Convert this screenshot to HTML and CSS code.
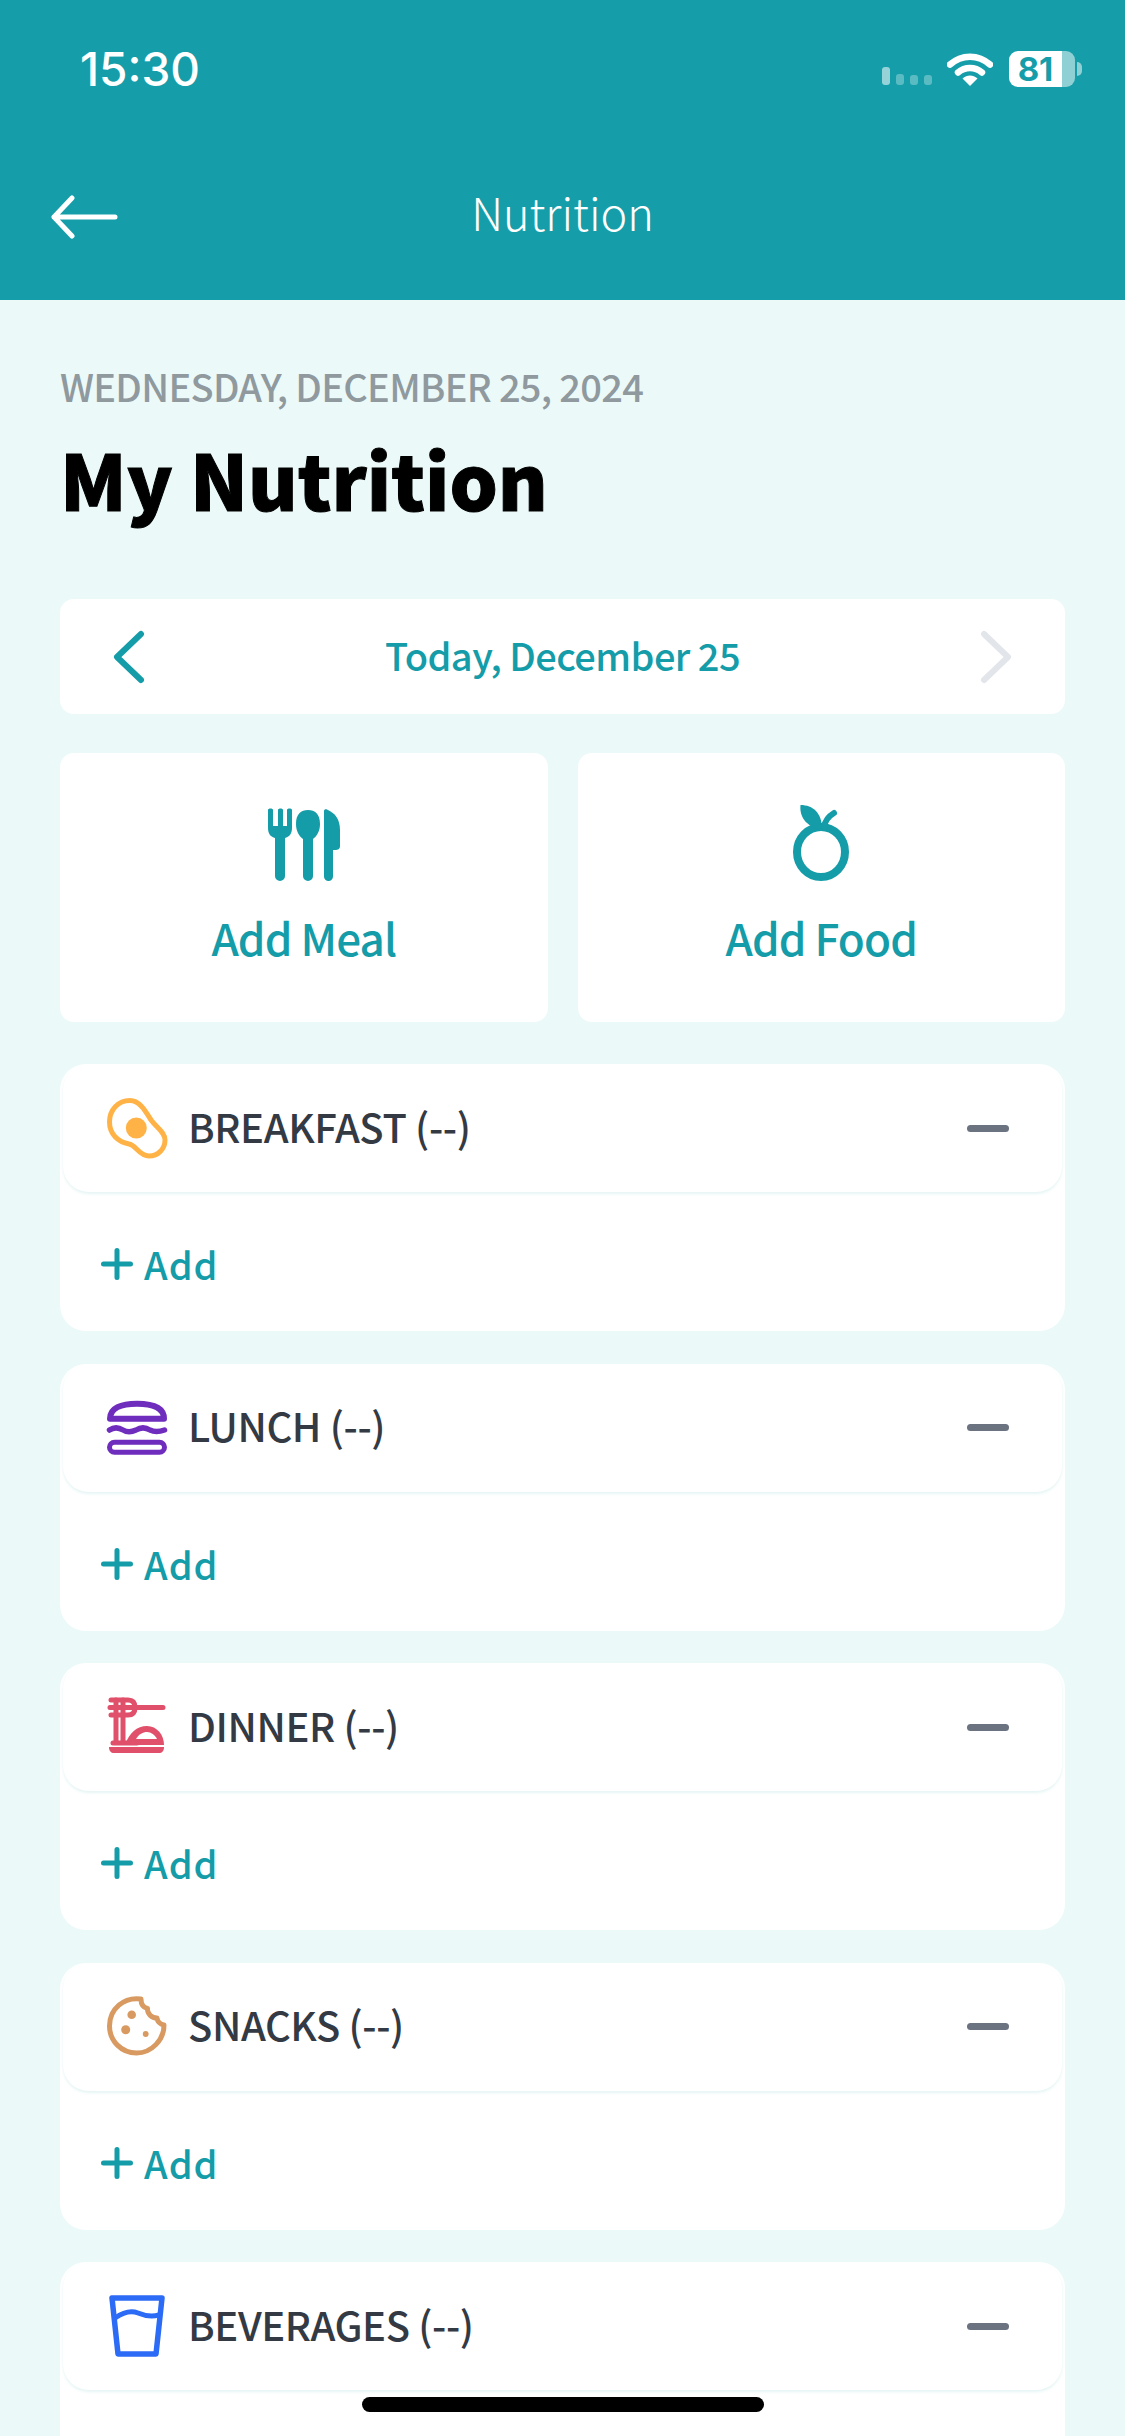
FILE: index.html
```html
<!DOCTYPE html>
<html lang="en">
<head>
    <meta charset="UTF-8">
    <meta name="viewport" content="width=device-width, initial-scale=1.0">
    <title>My Nutrition</title>
    <link rel="stylesheet" href="styles.css">
</head>
<body>
    <div class="screen">
        <header class="app-header">
            <div class="status-bar">
                <span class="status-time">15:30</span>
                <div class="status-icons">
                    <svg class="signal-icon" width="50" height="20" viewBox="0 0 50 20">
                        <rect x="0" y="1" width="8" height="18" rx="3" fill="#fff" opacity=".55"/>
                        <rect x="14" y="8" width="8" height="11" rx="3" fill="#fff" opacity=".3"/>
                        <rect x="28" y="9" width="8" height="10" rx="3" fill="#fff" opacity=".3"/>
                        <rect x="42" y="9" width="8" height="10" rx="3" fill="#fff" opacity=".3"/>
                    </svg>
                    <svg class="wifi-icon" width="46" height="33" viewBox="0 0 46 33">
                        <path d="M3 11.5C14.5 1 31.500 1 43 11.500" fill="none" stroke="#fff" stroke-width="6.500" stroke-linecap="round"/>
                        <path d="M11 19.500C18 13.500 28 13.500 35 19.500" fill="none" stroke="#fff" stroke-width="6.500" stroke-linecap="round"/>
                        <path d="M15.500 25.500C20 21.500 26 21.500 30.500 25.500L23 33Z" fill="#fff"/>
                    </svg>
                    <div class="battery">
                        <div class="battery-body">
                            <span class="battery-level">81</span>
                        </div>
                        <div class="battery-nub"></div>
                    </div>
                </div>
            </div>
            <div class="nav-bar">
                <svg class="back-icon" width="68" height="44" viewBox="0 0 68 44">
                    <path d="M22 3L4 22L22 41M4 22H65" fill="none" stroke="#fff" stroke-width="5" stroke-linecap="round" stroke-linejoin="round"/>
                </svg>
                <h1 class="nav-title">Nutrition</h1>
            </div>
        </header>

        <main class="content">
            <p class="today-label">WEDNESDAY, DECEMBER 25, 2024</p>
            <h2 class="page-title">My Nutrition</h2>

            <div class="date-picker">
                <svg width="34" height="54" viewBox="0 0 34 54">
                    <path d="M29 4L5 27L29 50" fill="none" stroke="#149ca8" stroke-width="6" stroke-linecap="round" stroke-linejoin="round"/>
                </svg>
                <span class="date-text">Today, December 25</span>
                <svg width="34" height="54" viewBox="0 0 34 54">
                    <path d="M5 4L29 27L5 50" fill="none" stroke="#e2e5e9" stroke-width="6" stroke-linecap="round" stroke-linejoin="round"/>
                </svg>
            </div>

            <div class="quick-actions">
                <div class="action-card">
                    <svg class="action-icon" width="76" height="76" viewBox="0 0 76 76">
                        <path d="M2 5V23C2 29 5 32 9 33V71A5 5 0 0 0 19 71V33C23 32 26 29 26 23V5C26 3 21 3 21 5V21H17V5C17 3 12 3 12 5V21H7V5C7 3 2 3 2 5Z" fill="#149ca8"/>
                        <path d="M30 19C30 9 35 5 42 5C49 5 54 9 54 19C54 26 51 31 47 34V71A5 5 0 0 1 37 71V34C33 31 30 26 30 19Z" fill="#149ca8"/>
                        <path d="M58 6C58 4 60 4 61 4.500C69 8 74 14 74 25V41C74 44 72 45 69 45H67V71.500A4.500 4.500 0 0 1 58 71.500Z" fill="#149ca8"/>
                    </svg>
                    <span class="action-label">Add Meal</span>
                </div>
                <div class="action-card">
                    <svg class="action-icon" width="60" height="76" viewBox="0 0 60 76">
                        <ellipse cx="30" cy="47" rx="24" ry="25" fill="none" stroke="#149ca8" stroke-width="8"/>
                        <path d="M9.500 0C22 0 31 8 31 24C18 23 8 14 9.500 0Z" fill="#149ca8"/>
                        <path d="M33 22C34 16 38 11 43 8" fill="none" stroke="#149ca8" stroke-width="6" stroke-linecap="round"/>
                    </svg>
                    <span class="action-label">Add Food</span>
                </div>
            </div>

            <section class="meal">
                <div class="meal-header">
                    <svg class="meal-icon" width="64" height="64" viewBox="0 0 64 64">
                        <path d="M25 4.500C13 4.500 4.500 14 4.500 26C4.500 38 13 46 24 48C31 49 34 60 44 60C53 60 60 53 60 44C60 36 52 32 46 24C41 16 35 4.500 25 4.500Z" fill="none" stroke="#ffb347" stroke-width="5"/>
                        <circle cx="31.300" cy="32" r="10.500" fill="#ffb347"/>
                    </svg>
                    <span class="meal-name">BREAKFAST (--)</span>
                    <span class="collapse-bar"></span>
                </div>
                <div class="meal-body">
                    <svg width="32" height="32" viewBox="0 0 32 32">
                        <path d="M16 2.500V29.500M2.500 16H29.500" stroke="#149ca8" stroke-width="5" stroke-linecap="round"/>
                    </svg>
                    <span class="add-link">Add</span>
                </div>
            </section>

            <section class="meal">
                <div class="meal-header">
                    <svg class="meal-icon" width="64" height="64" viewBox="0 0 64 64">
                        <path d="M5 22.700C5 12 16 7.700 32 7.700C48 7.700 59 12 59 22.700Z" fill="none" stroke="#6f2dbd" stroke-width="6" stroke-linejoin="round"/>
                        <path d="M4.500 34C9 31 13 31 18 34C22 36.500 26 36.500 31 34C36 31 40 31 45 34C50 36.500 54 36 59.500 34" fill="none" stroke="#6f2dbd" stroke-width="5.500" stroke-linecap="round"/>
                        <rect x="4.500" y="46.200" width="55" height="10" rx="5" fill="none" stroke="#6f2dbd" stroke-width="5"/>
                    </svg>
                    <span class="meal-name">LUNCH (--)</span>
                    <span class="collapse-bar"></span>
                </div>
                <div class="meal-body">
                    <svg width="32" height="32" viewBox="0 0 32 32">
                        <path d="M16 2.500V29.500M2.500 16H29.500" stroke="#149ca8" stroke-width="5" stroke-linecap="round"/>
                    </svg>
                    <span class="add-link">Add</span>
                </div>
            </section>

            <section class="meal">
                <div class="meal-header">
                    <svg class="meal-icon" width="64" height="64" viewBox="0 0 64 64">
                        <path d="M6 5H23C28 5 30 8 30 12.500C30 17 28 20 23 20H6M5 12.500H30M30 12.500H58" fill="none" stroke="#e0506a" stroke-width="5" stroke-linecap="round"/>
                        <path d="M11 5V46M18 5V46M8 48H32" fill="none" stroke="#e0506a" stroke-width="5" stroke-linecap="round"/>
                        <path d="M20 50C24 38 32 31 42 31C52 31 59 40 59 50Z" fill="#e0506a"/>
                        <path d="M31 44C34 39 38 37 42 37C46 37 50 40 52 44Z" fill="#fff"/>
                        <path d="M4 52H59C59 56 57 58 54 58H9C6 58 4 56 4 52Z" fill="#e0506a"/>
                    </svg>
                    <span class="meal-name">DINNER (--)</span>
                    <span class="collapse-bar"></span>
                </div>
                <div class="meal-body">
                    <svg width="32" height="32" viewBox="0 0 32 32">
                        <path d="M16 2.500V29.500M2.500 16H29.500" stroke="#149ca8" stroke-width="5" stroke-linecap="round"/>
                    </svg>
                    <span class="add-link">Add</span>
                </div>
            </section>

            <section class="meal">
                <div class="meal-header">
                    <svg class="meal-icon" width="64" height="64" viewBox="0 0 64 64">
                        <path d="M36 4C19 1.500 4.500 14 4.500 31C4.500 46 16.500 58 31.500 58C46.500 58 59 45 59 30C54 29 52.500 26.500 52 23C47 23 42 19 42.500 13.500C38 12.500 36 9 36 4Z" fill="none" stroke="#d89a60" stroke-width="5" stroke-linejoin="round"/>
                        <circle cx="26.700" cy="19.700" r="4.300" fill="#d89a60"/>
                        <circle cx="20.700" cy="34.700" r="4.500" fill="#d89a60"/>
                        <circle cx="40.700" cy="39" r="2.900" fill="#d89a60"/>
                    </svg>
                    <span class="meal-name">SNACKS (--)</span>
                    <span class="collapse-bar"></span>
                </div>
                <div class="meal-body">
                    <svg width="32" height="32" viewBox="0 0 32 32">
                        <path d="M16 2.500V29.500M2.500 16H29.500" stroke="#149ca8" stroke-width="5" stroke-linecap="round"/>
                    </svg>
                    <span class="add-link">Add</span>
                </div>
            </section>

            <section class="meal">
                <div class="meal-header">
                    <svg class="meal-icon" width="64" height="64" viewBox="0 0 64 64">
                        <path d="M7 4H57L51 60H13Z" fill="none" stroke="#2b6bf5" stroke-width="5.500" stroke-linejoin="round"/>
                        <path d="M10 24C20 17 28 17 33 19C40 22 46 23 54 21" fill="none" stroke="#2b6bf5" stroke-width="5"/>
                    </svg>
                    <span class="meal-name">BEVERAGES (--)</span>
                    <span class="collapse-bar"></span>
                </div>
            </section>
        </main>

        <div class="home-indicator"></div>
    </div>
</body>
</html>
```

FILE: styles.css
```css
* {
    margin: 0;
    padding: 0;
    box-sizing: border-box;
    font-family: "Noto Sans CJK JP", "Noto Sans", sans-serif;
}

body {
    background-color: #ecf9f9;
}

.screen {
    position: relative;
    width: 1125px;
    height: 2436px;
    overflow: hidden;
}

.app-header {
    height: 300px;
    background-color: #159ea9;
    color: #fff;
}

.status-bar {
    display: flex;
    justify-content: space-between;
    height: 112px;
    padding: 46px 43px 0 80px;
}

.status-time {
    font-family: Inter, sans-serif;
    font-size: 46px;
    font-weight: 500;
    line-height: 46px;
}

.status-icons {
    display: flex;
    align-items: flex-start;
    margin-top: 5px;
}

.signal-icon {
    margin: 15px 15px 0 0;
}

.wifi-icon {
    margin: 2px 16px 0 0;
}

.battery {
    display: flex;
    align-items: center;
}

.battery-body {
    width: 66px;
    height: 36px;
    border-radius: 9px;
    background: linear-gradient(to right, #fff 53px, #8fd0d4 53px);
}

.battery-level {
    display: block;
    width: 53px;
    font-family: Inter, sans-serif;
    font-size: 33px;
    font-weight: 700;
    line-height: 36px;
    text-align: center;
    color: #159ea9;
}

.battery-nub {
    width: 5px;
    height: 14px;
    margin-left: 2px;
    border-radius: 0 5px 5px 0;
    background-color: #8fd0d4;
}

.nav-bar {
    position: relative;
    display: flex;
    justify-content: center;
    height: 188px;
    padding-top: 72px;
}

.back-icon {
    position: absolute;
    left: 50px;
    top: 83px;
}

.nav-title {
    font-size: 45px;
    font-weight: 300;
    line-height: 56px;
}

.content {
    padding: 60px 60px 0;
}

.today-label {
    font-size: 38px;
    font-weight: 500;
    line-height: 52px;
    letter-spacing: -0.7px;
    color: #8f999e;
}

.page-title {
    margin-top: 18px;
    font-size: 76px;
    font-weight: 900;
    line-height: 96px;
    color: #000;
    -webkit-text-stroke: 1px #000;
}

.date-picker {
    display: flex;
    justify-content: space-between;
    align-items: center;
    height: 115px;
    margin-top: 73px;
    padding: 0 52px;
    border-radius: 14px;
    background-color: #fff;
}

.date-text {
    margin-bottom: 5px;
    font-size: 38px;
    font-weight: 500;
    letter-spacing: -0.55px;
    color: #149ca8;
}

.quick-actions {
    display: grid;
    grid-template-columns: 1fr 1fr;
    gap: 30px;
    margin-top: 39px;
}

.action-card {
    display: flex;
    flex-direction: column;
    align-items: center;
    height: 269px;
    padding-top: 52px;
    border-radius: 14px;
    background-color: #fff;
}

.action-label {
    margin-top: 25px;
    font-size: 44px;
    font-weight: 500;
    line-height: 62px;
    letter-spacing: -0.9px;
    color: #149ca8;
}

.meal {
    height: 267px;
    margin-top: 32.6px;
    border-radius: 26px;
    background-color: #fff;
}

.quick-actions + .meal {
    margin-top: 42px;
}

.meal-header {
    display: flex;
    align-items: center;
    height: 128px;
    margin: 0 3px;
    padding: 0 53px 0 42px;
    border-radius: 26px;
    background-color: #fff;
    box-shadow: 0 2px 3px #e6f5f4;
}

.meal-icon {
    flex-shrink: 0;
    margin-right: 19px;
}

.meal-name {
    flex: 1;
    margin-bottom: 5px;
    font-size: 40px;
    font-weight: 500;
    letter-spacing: -0.4px;
    color: #343a44;
}

.collapse-bar {
    width: 42px;
    height: 7px;
    border-radius: 4px;
    background-color: #6b7280;
}

.meal-body {
    display: flex;
    align-items: center;
    gap: 11px;
    padding: 45px 0 0 41px;
}

.add-link {
    font-size: 38px;
    font-weight: 500;
    line-height: 54px;
    letter-spacing: 1px;
    color: #149ca8;
}

.home-indicator {
    position: absolute;
    left: 362px;
    top: 2397px;
    width: 402px;
    height: 15px;
    border-radius: 8px;
    background-color: #000;
}
```
